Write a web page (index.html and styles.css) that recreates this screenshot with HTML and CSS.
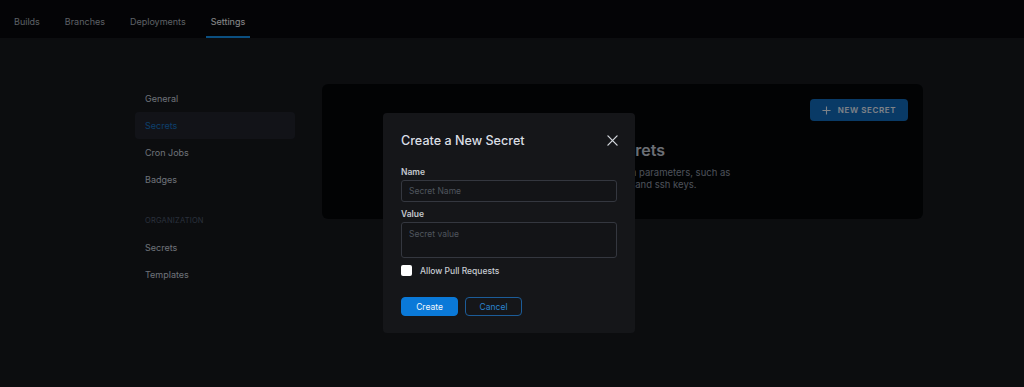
FILE: index.html
```html
<!DOCTYPE html>
<html lang="en">
<head>
<meta charset="utf-8">
<title>Settings - Secrets</title>
<link rel="stylesheet" href="styles.css">
</head>
<body>
<div class="app">
  <header class="topnav">
    <a class="tab">Builds</a>
    <a class="tab">Branches</a>
    <a class="tab">Deployments</a>
    <a class="tab active">Settings</a>
  </header>
  <main class="content">
    <nav class="sidebar">
      <a class="side-item">General</a>
      <a class="side-item active">Secrets</a>
      <a class="side-item">Cron Jobs</a>
      <a class="side-item">Badges</a>
      <div class="side-label">ORGANIZATION</div>
      <a class="side-item">Secrets</a>
      <a class="side-item">Templates</a>
    </nav>
    <section class="card">
      <div class="card-head">
        <button class="btn-new">
          <svg class="plus" viewBox="0 0 10 10" width="9" height="9"><path d="M5 0.5v9M0.5 5h9" stroke="currentColor" stroke-width="1.2" fill="none"/></svg>
          NEW SECRET
        </button>
      </div>
      <div class="empty">
        <h2 class="empty-title">No Secrets</h2>
        <p class="empty-text">Secrets store configuration parameters, such as<br>passwords, tokens and ssh keys.</p>
      </div>
    </section>
  </main>
</div>

<div class="overlay">
  <div class="modal">
    <div class="modal-head">
      <h3 class="modal-title">Create a New Secret</h3>
      <button class="close" aria-label="Close">
        <svg viewBox="0 0 12 12" width="11" height="11"><path d="M1 1l10 10M11 1L1 11" stroke="currentColor" stroke-width="1.4" fill="none" stroke-linecap="round"/></svg>
      </button>
    </div>
    <label class="field-label">Name</label>
    <input class="field-input" type="text" placeholder="Secret Name">
    <label class="field-label">Value</label>
    <textarea class="field-area" placeholder="Secret value"></textarea>
    <label class="check-row">
      <span class="checkbox"></span>
      <span class="check-text">Allow Pull Requests</span>
    </label>
    <div class="actions">
      <button class="btn btn-primary">Create</button>
      <button class="btn btn-outline">Cancel</button>
    </div>
  </div>
</div>
</body>
</html>
```

FILE: styles.css
```css
* { box-sizing: border-box; }
html, body { margin: 0; padding: 0; height: 100%; }
body {
  font-family: Inter, "Noto Sans", "Liberation Sans", sans-serif;
  background: #16181d;
  overflow: hidden;
}
.app { min-height: 100%; }

.topnav {
  height: 38px;
  background: #09090b;
  display: flex;
  align-items: stretch;
  padding-left: 14px;
}
.tab {
  display: flex;
  align-items: center;
  font-size: 9px;
  color: #a8afba;
  margin-right: 25px;
  padding: 6px 0 2px 0;
}
.tab.active {
  color: #f5f7fa;
  padding: 6px 5px 0 5px;
  margin-left: -5px;
  border-bottom: 2px solid #1490e9;
}

.content {
  display: flex;
  align-items: flex-start;
  padding: 46px 0 0 135px;
  gap: 27px;
}
.sidebar {
  width: 160px;
  display: flex;
  flex-direction: column;
  padding-top: 1px;
}
.side-item {
  height: 27px;
  display: flex;
  align-items: center;
  padding-left: 10px;
  font-size: 9px;
  color: #c8cfdb;
  border-radius: 4px;
}
.side-item.active {
  background: #21242d;
  color: #1873c3;
}
.side-label {
  height: 27px;
  margin-top: 14px;
  display: flex;
  align-items: center;
  padding-left: 10px;
  font-size: 7.5px;
  letter-spacing: 0.2px;
  color: #4e586b;
}

.card {
  width: 601px;
  background: #050709;
  border-radius: 6px;
  padding: 15px 15px 28px 15px;
}
.card-head { display: flex; justify-content: flex-end; }
.btn-new {
  width: 98px;
  height: 22px;
  border: none;
  border-radius: 4px;
  background: #126aba;
  color: #e6eef8;
  font-family: inherit;
  font-size: 8px;
  font-weight: 600;
  letter-spacing: 0.6px;
  display: flex;
  align-items: center;
  justify-content: center;
  gap: 7px;
  padding: 0;
}
.plus { display: block; }
.empty { text-align: center; margin-top: 19px; }
.empty-title {
  margin: 0;
  font-size: 16px;
  line-height: 20px;
  font-weight: 600;
  color: #c4cad6;
}
.empty-text {
  margin: 7px 0 0 0;
  font-size: 9.5px;
  line-height: 12px;
  color: #8c94a2;
}

.overlay {
  position: fixed;
  inset: 0;
  background: rgba(0, 0, 0, 0.45);
  display: flex;
  align-items: flex-start;
  justify-content: flex-start;
  padding: 113px 0 0 383px;
}
.modal {
  width: 252px;
  background: #151619;
  border-radius: 4px;
  padding: 17px 18px 17px 18px;
  display: flex;
  flex-direction: column;
}
.modal-head {
  display: flex;
  justify-content: space-between;
  align-items: center;
  height: 20px;
  margin-bottom: 16px;
}
.modal-title {
  margin: 0;
  font-size: 12.6px;
  font-weight: 500;
  color: #dadee4;
}
.close {
  background: none;
  border: none;
  padding: 0;
  color: #d4d8de;
  display: flex;
  margin-right: -1px;
}
.close svg { display: block; }
.field-label {
  font-size: 8.5px;
  font-weight: 600;
  color: #c4c8cf;
  line-height: 12px;
  margin-bottom: 2px;
}
.field-input, .field-area {
  width: 216px;
  background: #131417;
  border: 1px solid #34373f;
  border-radius: 3px;
  font-family: inherit;
  font-size: 8.5px;
  color: #d0d4da;
  padding: 0 7px;
  outline: none;
}
.field-input { height: 22px; margin-bottom: 6px; }
.field-area {
  height: 36px;
  resize: none;
  padding-top: 6px;
  margin-bottom: 7px;
  display: block;
}
.field-input::placeholder, .field-area::placeholder { color: #4f545d; }
.check-row {
  display: flex;
  align-items: center;
  gap: 8px;
  height: 11px;
  margin-bottom: 21px;
}
.checkbox {
  width: 11px;
  height: 11px;
  background: #ffffff;
  border-radius: 2px;
}
.check-text {
  font-size: 8.5px;
  color: #c8ccd3;
  font-weight: 500;
}
.actions { display: flex; gap: 7px; }
.btn {
  width: 57px;
  height: 19px;
  border-radius: 4px;
  font-family: inherit;
  font-size: 8.5px;
  padding: 0;
}
.btn-primary {
  background: #0a79d8;
  border: 1px solid #0a79d8;
  color: #f2f7fc;
}
.btn-outline {
  background: transparent;
  border: 1px solid #1c5c98;
  color: #2a84d0;
}
```
